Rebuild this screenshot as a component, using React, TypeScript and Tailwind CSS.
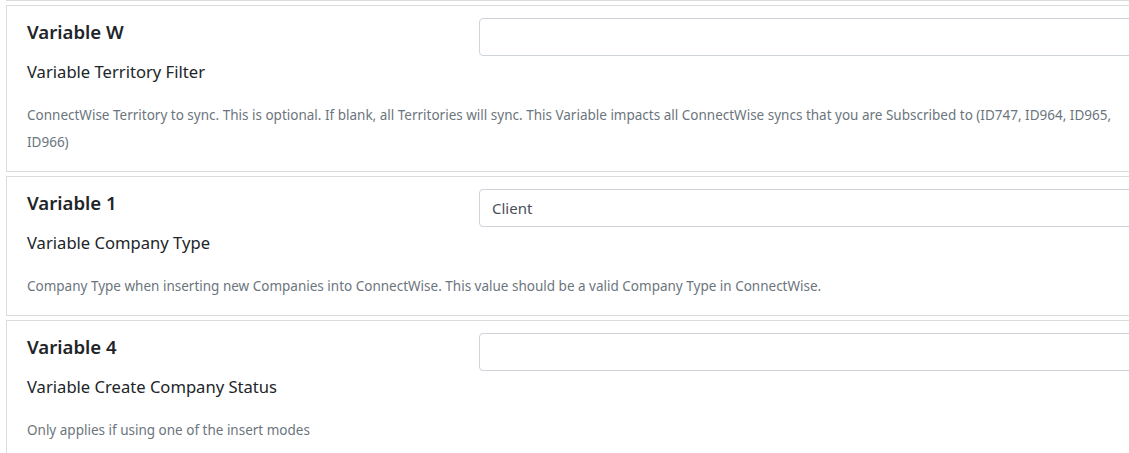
import * as React from 'react';

type Variable = {
  name: string;
  label: string;
  value: string;
  help: string;
};

const VARIABLES: Variable[] = [
  {
    name: 'Variable W',
    label: 'Variable Territory Filter',
    value: '',
    help: 'ConnectWise Territory to sync. This is optional. If blank, all Territories will sync. This Variable impacts all ConnectWise syncs that you are Subscribed to (ID747, ID964, ID965, ID966)',
  },
  {
    name: 'Variable 1',
    label: 'Variable Company Type',
    value: 'Client',
    help: 'Company Type when inserting new Companies into ConnectWise. This value should be a valid Company Type in ConnectWise.',
  },
  {
    name: 'Variable 4',
    label: 'Variable Create Company Status',
    value: '',
    help: 'Only applies if using one of the insert modes',
  },
];

function VariableCard({ v }: { v: Variable }) {
  return (
    <div className="mb-[4px] w-[1160px] border border-[#dcdcdc] bg-white pl-5 pr-5 pt-3 pb-[15px]">
      <div className="grid grid-cols-[452px_1fr]">
        <div>
          <h3 className="text-[18.6px] font-semibold leading-[27px] text-[#212529]">{v.name}</h3>
          <p className="mt-[15px] text-[16.6px] leading-[24px] text-[#212529]">{v.label}</p>
        </div>
        <div>
          <input
            type="text"
            defaultValue={v.value}
            className="block h-[38px] w-full rounded-[4px] border border-[#ced4da] bg-white px-3 text-[15px] text-[#495057] outline-none"
          />
        </div>
      </div>
      <p className="mt-[18px] w-[1091px] text-[13.5px] leading-[27px] text-[#6c757d]">{v.help}</p>
    </div>
  );
}

export default function App() {
  return (
    <div
      className="h-[453px] w-[1129px] overflow-hidden bg-white pl-[6px]"
      style={{ fontFamily: '"Noto Sans", "Open Sans", sans-serif' }}
    >
      <div className="mb-[4px] h-px w-[1160px] bg-[#dcdcdc]" />
      {VARIABLES.map((v) => (
        <VariableCard key={v.name} v={v} />
      ))}
    </div>
  );
}
